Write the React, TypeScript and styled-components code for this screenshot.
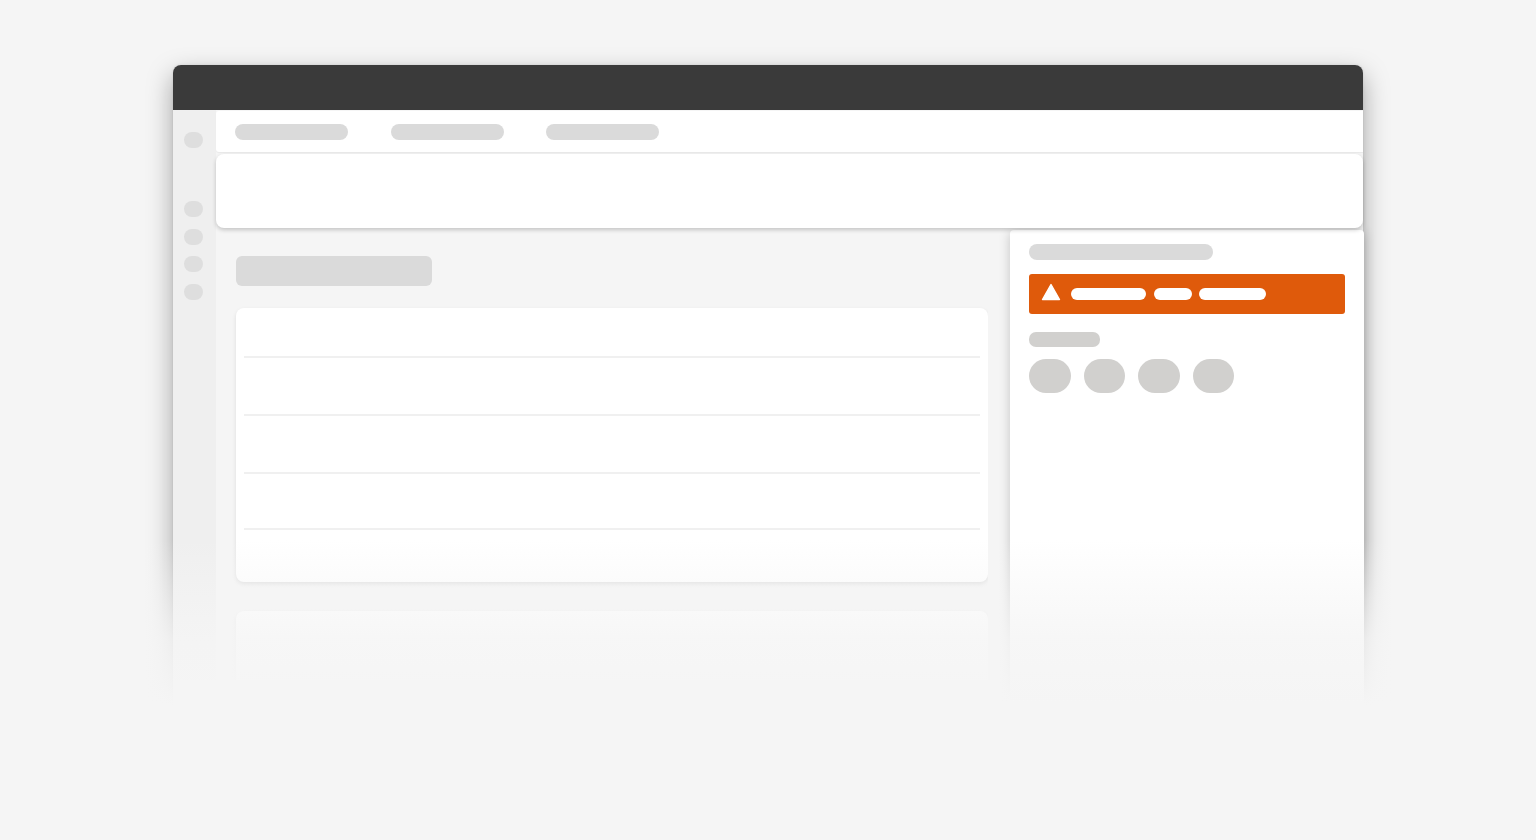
import React from "react";
import styled, { createGlobalStyle } from "styled-components";

const Global = createGlobalStyle`
  html, body { margin: 0; padding: 0; height: 100%; background: #f5f5f5; overflow: hidden; }
  #root { height: 100%; }
`;
const Page = styled.div`
  position: relative; width: 1536px; height: 840px; padding: 65px 0 0 173px;
  box-sizing: border-box; background: #f5f5f5; overflow: hidden;
`;
const Frame = styled.div`
  width: 1190px; height: 640px; display: flex; flex-direction: column;
  border-radius: 8px 8px 0 0; background: #f5f5f5;
  box-shadow: 0 10px 26px rgba(0,0,0,.34), 0 0 3px rgba(0,0,0,.1);
`;
const TitleBar = styled.div`
  flex: 0 0 45px; background: #3a3a3a; border-radius: 8px 8px 0 0;
`;
const Body = styled.div`flex: 1; display: flex; min-height: 0;`;
const Sidebar = styled.div`
  flex: 0 0 43px; height: 570px; box-sizing: border-box; background: #efefef; padding: 22px 0 0 11px;
  display: flex; flex-direction: column; align-items: flex-start;
`;
const NavDot = styled.div<{ $gap: number }>`
  width: 19px; height: 16px; border-radius: 8px; background: #dedede; margin-top: ${p => p.$gap}px; flex: none;
`;
const Content = styled.div`flex: 1; min-width: 0; display: flex; flex-direction: column;`;
const Tabs = styled.div`
  flex: 0 0 41px; box-sizing: border-box; margin-top: 1px; background: #fff; display: flex; gap: 42.5px;
  padding: 13px 0 0 19px; border-radius: 3px 0 0 3px; box-shadow: 0 1px 1px rgba(0,0,0,.05);
`;
const TabPill = styled.div`width: 113px; height: 16px; border-radius: 8px; background: #dadada;`;
const HeaderCard = styled.div`
  flex: 0 0 74px; margin-top: 2px; background: #fff; border-radius: 8px;
  box-shadow: 0 2px 4px rgba(0,0,0,.2); position: relative; z-index: 1;
`;
const Columns = styled.div`flex: 1; min-height: 0; display: flex; justify-content: space-between;`;
const Main = styled.div`
  width: 772px; height: 452px; overflow: hidden; box-sizing: border-box; padding: 28px 0 0 20px;
  display: flex; flex-direction: column;
`;
const Heading = styled.div`width: 196px; height: 30px; flex: none; border-radius: 6px; background: #dadada;`;
const Card = styled.div<{ $h: number; $mt: number }>`
  width: 752px; height: ${p => p.$h}px; margin-top: ${p => p.$mt}px; flex: none; background: #fff; border-radius: 8px;
  box-shadow: 0 2px 4px rgba(0,0,0,.1); box-sizing: border-box; padding: 0 8px; display: flex; flex-direction: column;
`;
const Row = styled.div<{ $h: number }>`
  height: ${p => p.$h}px; flex: none; box-sizing: border-box; border-bottom: 2px solid #f0f0f0;
`;
const Panel = styled.div`
  width: 354px; margin: 2px -1px 0 0; box-sizing: border-box; background: #fff; padding: 14px 19px 0;
  border-radius: 4px 4px 0 0; box-shadow: 0 2px 12px rgba(0,0,0,.2);
  display: flex; flex-direction: column; align-items: flex-start;
`;
const PanelTitle = styled.div`width: 184px; height: 16px; flex: none; border-radius: 8px; background: #dadada;`;
const Banner = styled.div`
  width: 316px; height: 40px; margin-top: 14px; flex: none; box-sizing: border-box; background: #df5a0b; border-radius: 3px;
  display: flex; align-items: center; padding: 0 0 0 12px;
`;
const WarnIcon = styled.svg`width: 20px; height: 18px; margin-bottom: 4px; flex: none;`;
const BannerPill = styled.div<{ $w: number; $ml: number }>`
  width: ${p => p.$w}px; height: 12px; margin-left: ${p => p.$ml}px; border-radius: 6px; background: #fff;
`;
const Label = styled.div`width: 71px; height: 15px; margin-top: 18px; flex: none; border-radius: 7px; background: #d1d0ce;`;
const Chips = styled.div`display: flex; gap: 13px; margin-top: 12px;`;
const Chip = styled.div`width: 41.5px; height: 34px; border-radius: 17px; background: #d1d0ce;`;
const Fade = styled.div`
  position: absolute; left: 0; right: 0; top: 540px; height: 165px; pointer-events: none; z-index: 5;
  background: linear-gradient(to bottom, rgba(245,245,245,0), rgba(245,245,245,.5) 35%, rgba(245,245,245,.82) 60%, #f5f5f5);
`;
const Bottom = styled.div`
  position: absolute; left: 0; right: 0; top: 705px; bottom: 0; background: #f5f5f5; z-index: 5;
`;

export default function App() {
  return (
    <Page>
      <Global />
      <Frame>
        <TitleBar />
        <Body>
          <Sidebar>
            <NavDot $gap={0} />
            <NavDot $gap={53} />
            <NavDot $gap={12} />
            <NavDot $gap={11} />
            <NavDot $gap={12} />
          </Sidebar>
          <Content>
            <Tabs><TabPill /><TabPill /><TabPill /></Tabs>
            <HeaderCard />
            <Columns>
              <Main>
                <Heading />
                <Card $h={274} $mt={22}>
                  <Row $h={50} /><Row $h={58} /><Row $h={58} /><Row $h={56} />
                </Card>
                <Card $h={120} $mt={29} />
              </Main>
              <Panel>
                <PanelTitle />
                <Banner>
                  <WarnIcon viewBox="0 0 20 18">
                    <path d="M10 1.5 L18.5 16.5 H1.5 Z" fill="#fff" stroke="#fff" strokeWidth="1.4" strokeLinejoin="round" />
                  </WarnIcon>
                  <BannerPill $w={75} $ml={10} />
                  <BannerPill $w={38} $ml={8} />
                  <BannerPill $w={67} $ml={7} />
                </Banner>
                <Label />
                <Chips><Chip /><Chip /><Chip /><Chip /></Chips>
              </Panel>
            </Columns>
          </Content>
        </Body>
      </Frame>
      <Fade />
      <Bottom />
    </Page>
  );
}
